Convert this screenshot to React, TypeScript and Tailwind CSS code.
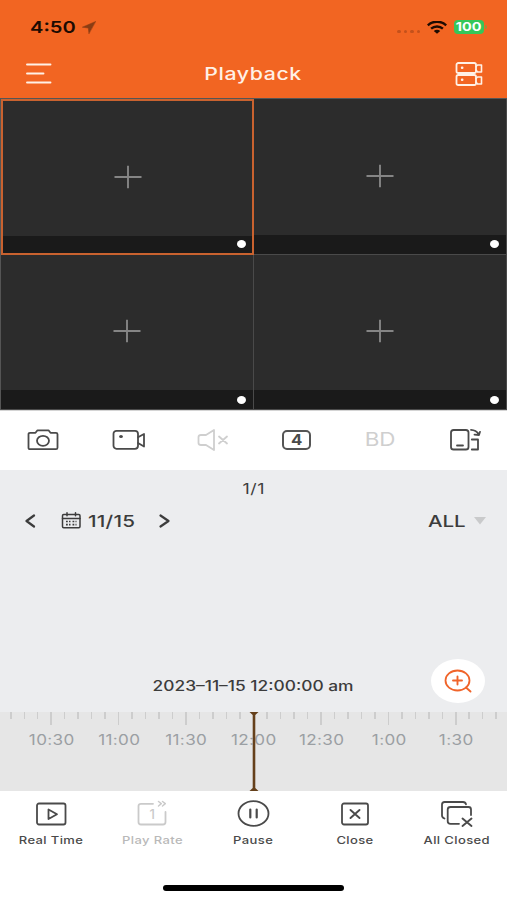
import type { ReactNode } from "react";

type IconProps = { w: number; h: number; className?: string; children: ReactNode };

function Icon({ w, h, className = "", children }: IconProps) {
  return (
    <svg
      width={w}
      height={h}
      viewBox={`0 0 ${w} ${h}`}
      fill="none"
      stroke="currentColor"
      strokeWidth="1.8"
      strokeLinecap="round"
      strokeLinejoin="round"
      className={`shrink-0 ${className}`}
    >
      {children}
    </svg>
  );
}

function StatusBar() {
  return (
    <div className="flex h-[52px] items-center justify-between pt-[2px] pr-[20px] pl-[30px]">
      <div className="flex items-center">
        <span className="w-[46px] origin-left scale-x-[1.22] text-[16.5px] font-semibold text-[#1d0b02]">4:50</span>
        <Icon w={14} h={13} className="ml-[6px] text-[#8a3d14]">
          <path d="M13.5.5.3 6.2l6 .8.6 5.500z" fill="currentColor" strokeWidth=".5" />
        </Icon>
      </div>
      <div className="flex items-center">
        <div className="mt-[8px] flex gap-[3px] pr-[7px]">
          {[0, 1, 2, 3].map((i) => (
            <i key={i} className="h-[3px] w-[3.5px] rounded-full bg-[#c4511b]" />
          ))}
        </div>
        <Icon w={20} h={13} className="text-[#1d0b02]">
          <g strokeLinecap="butt" strokeWidth="2.4">
            <path d="M.8 4.300C6-.5 14-.5 19.200 4.300" />
            <path d="M4.100 7.700c3.300-3 8.500-3 11.800 0" />
          </g>
          <path d="M6.800 10c1.900-1.600 4.500-1.600 6.400 0L10 12.800z" fill="currentColor" stroke="none" />
        </Icon>
        <div className="ml-[7px] flex h-[14px] w-[30px] items-center justify-center rounded-[4px] bg-[#35c759]">
          <span className="scale-x-[1.2] text-[12px] leading-[14px] font-bold text-white">100</span>
        </div>
        <i className="ml-[1px] h-[4px] w-[2px] rounded-r-full bg-[#8f9a3a]" />
      </div>
    </div>
  );
}

function Header() {
  return (
    <header className="h-[98px] bg-[#f26522]">
      <StatusBar />
      <div className="flex h-[44px] items-center justify-between pr-[24px] pl-[26px] text-[#fff1e6]">
        <Icon w={26} h={22}>
          <path d="M1 1.500h23.500M1 10.500h16.500M1 19.500h23.500" strokeWidth="1.900" />
        </Icon>
        <h1 className="scale-x-[1.25] pt-[2px] text-[17px] font-medium tracking-[0.500px]">Playback</h1>
        <Icon w={28} h={26}>
          <rect x="1.500" y="2" width="19.500" height="10" rx="1.800" />
          <rect x="1.500" y="14" width="19.500" height="10" rx="1.800" />
          <path d="m21 5.500 1.500-1.500H26.500v7h-4L21 9M21 17.500l1.500-1.500H26.500v7h-4L21 21" strokeWidth="1.600" />
          <path d="M7 6.800h.3M7 18.800h.3" strokeWidth="2.400" />
        </Icon>
      </div>
    </header>
  );
}

function Channel({ selected = false }: { selected?: boolean }) {
  return (
    <div
      className={`flex flex-col bg-[#2c2c2c] ${
        selected ? "border-2 border-[#c9622f]" : "border-r border-b border-[#4a4a4a]"
      }`}
    >
      <div className="flex flex-1 items-center justify-center pt-[18px]">
        <Icon w={28} h={24} className="text-[#858585]">
          <path d="M.5 12h27M14 .8v22.400" strokeWidth="1.900" strokeLinecap="butt" />
        </Icon>
      </div>
      <div className={`flex items-center justify-end bg-[#1a1a1a] ${selected ? "h-[17px] pr-[6px]" : "h-[19px] pr-[7px]"}`}>
        <i className="h-[8px] w-[9px] rounded-[50%] bg-white" />
      </div>
    </div>
  );
}

function Toolbar() {
  return (
    <div className="grid h-[60px] grid-cols-6 items-center border-t border-[#d4d4d4] bg-white pb-[2px] text-[#4a4a4a]">
      <div className="flex justify-center pl-[2px]">
        <Icon w={32} h={22}>
          <path d="M3 3.800h5.500l2-2.500h11l2 2.500H29q1.500 0 1.500 1.500v13.400q0 1.500-1.500 1.500H3q-1.500 0-1.500-1.500V5.300Q1.500 3.800 3 3.800Z" />
          <ellipse cx="16" cy="11.800" rx="6" ry="5" />
        </Icon>
      </div>
      <div className="flex justify-center pl-[4px]">
        <Icon w={34} h={22}>
          <rect x="1.500" y="1.800" width="24.500" height="18" rx="3" />
          <path d="M26 8.200 32 5v12.500l-6-3.500" />
          <ellipse cx="9" cy="7.500" rx="1.900" ry="1.600" fill="currentColor" stroke="none" />
        </Icon>
      </div>
      <div className="flex justify-center pl-[3px] text-[#cfcfcf]">
        <Icon w={32} h={22}>
          <path d="M4 6h5l8-5v20l-8-5H4q-2.500 0-2.500-2V8Q1.500 6 4 6Z" />
          <path d="m22 7.500 8 7M30 7.500l-8 7" />
        </Icon>
      </div>
      <div className="flex justify-center pl-px">
        <div className="flex h-[20px] w-[29px] items-center justify-center rounded-[5px] border-2 border-[#555555]">
          <span className="scale-x-[1.2] text-[14px] leading-none font-bold">4</span>
        </div>
      </div>
      <div className="flex justify-center pt-px">
        <span className="scale-x-[1.180] text-[19px] font-normal text-[#cfcfcf]">BD</span>
      </div>
      <div className="flex justify-center">
        <Icon w={32} h={23}>
          <rect x="2" y="2" width="17.500" height="19.500" rx="2.600" />
          <path d="M8 17.500h6M22 1.800q5 .2 7.800 4.500M31 3.800l-1 3.200-4.500-.4M22.800 11.500h6.200v10H22.800" />
        </Icon>
      </div>
    </div>
  );
}

function DateControls() {
  return (
    <div className="flex h-[30px] items-center justify-between pr-[21px] pl-[24px] text-[#3c3c3c]">
      <div className="flex items-center">
        <Icon w={12} h={14}>
          <path d="M10 1.500 2.500 7l7.500 5.500" strokeWidth="2.200" />
        </Icon>
        <Icon w={21} h={17} className="mb-px ml-[25px]">
          <rect x="1.500" y="2.500" width="17.500" height="13.300" rx="1.200" strokeWidth="1.500" />
          <path d="M1.500 6.500H19M6 .8v3M14.500.8v3" strokeWidth="1.500" />
          <path d="M5 9.500h4.500M11.500 9.500h4M5 12.700h4.500M11.500 12.700h4" strokeWidth="1.700" strokeDasharray="1.800 1.200" strokeLinecap="butt" />
        </Icon>
        <span className="ml-[6px] w-[69px] origin-left scale-x-[1.250] text-[16.500px] font-medium tracking-[0.200px] whitespace-nowrap">11/15</span>
        <Icon w={13} h={14} className="ml-px">
          <path d="m2.500 1.500 8 5.500-8 5.500" strokeWidth="2.200" />
        </Icon>
      </div>
      <div className="flex items-center">
        <span className="w-[46px] origin-left scale-x-[1.280] text-[16px] font-medium">ALL</span>
        <Icon w={12} h={8} className="text-[#c9cacb]">
          <path d="M0 0h12L6 7.500Z" fill="currentColor" stroke="none" />
        </Icon>
      </div>
    </div>
  );
}

const TIMES = ["10:30", "11:00", "11:30", "12:00", "12:30", "1:00", "1:30"];
const TICKS = Array.from({ length: 37 }, (_, i) => i - 18);

function Timeline() {
  return (
    <div className="relative h-[79px] overflow-hidden bg-[#e6e6e6]">
      <div className="flex h-[15px] justify-center">
        {TICKS.map((k) => (
          <div key={k} className="flex w-[13.490px] shrink-0 justify-center">
            <i className={`w-[1.500px] bg-[#cdcdcd] ${k % 5 === 0 ? "h-[13px]" : "h-[7px]"}`} />
          </div>
        ))}
      </div>
      <div className="flex justify-center pl-px text-[#9b9fa3]">
        {TIMES.map((t) => (
          <div key={t} className="flex w-[67.450px] shrink-0 justify-center">
            <span className="scale-x-[1.220] text-[14px] leading-[26px] tracking-[0.300px]">{t}</span>
          </div>
        ))}
      </div>
      <svg width="12" height="79" viewBox="0 0 12 79" className="absolute top-0 left-[248px]" fill="#65401b">
        <path d="M1.500 0h9L7.300 3v73l3.200 3h-9l3.200-3V3Z" />
      </svg>
    </div>
  );
}

function PlaybackPanel() {
  return (
    <section className="flex h-[321px] flex-col bg-[#ecedef]">
      <div className="flex h-[36px] items-center justify-center text-[#3c3c3c]">
        <span className="scale-x-[1.270] text-[14px] tracking-[0.400px]">1/1</span>
      </div>
      <DateControls />
      <div className="relative mt-auto flex h-[54px] items-center justify-center text-[#3c3c3c]">
        <span className="scale-x-[1.240] text-[14px] font-medium whitespace-nowrap">2023–11–15 12:00:00 am</span>
        <button className="absolute top-px right-[22px] flex h-[44px] w-[54px] items-center justify-center rounded-[50%] bg-white text-[#f0642a]">
          <Icon w={28} h={24}>
            <ellipse cx="13.500" cy="11.500" rx="12" ry="10" />
            <path d="M9 11.500h9M13.500 7.500v8M22 18.500l4.500 4" strokeWidth="1.900" />
          </Icon>
        </button>
      </div>
      <Timeline />
    </section>
  );
}

function Action({ label, muted = false, children }: { label: string; muted?: boolean; children: ReactNode }) {
  return (
    <div className={`flex flex-col items-center ${muted ? "text-[#b9b9b9]" : "text-[#4a4a4a]"}`}>
      <div className="flex h-[29px] items-center">{children}</div>
      <span className="mt-[6px] scale-x-[1.240] text-[10.500px] leading-[14px] font-medium tracking-[0.300px] whitespace-nowrap">{label}</span>
    </div>
  );
}

function BottomBar() {
  return (
    <footer className="flex h-[109px] flex-col bg-white pt-[8px]">
      <div className="grid grid-cols-5">
        <Action label="Real Time">
          <Icon w={32} h={24}>
            <rect x="2" y="1.500" width="28.500" height="21" rx="2" />
            <path d="M13.500 7.500v9.500l8.500-4.800Z" />
          </Icon>
        </Action>
        <Action label="Play Rate" muted>
          <div className="relative text-[#cacaca]">
            <Icon w={32} h={24} className="overflow-visible">
              <path d="M17 1.800H5Q2.500 1.800 2.500 4v16q0 2.500 2.500 2.500h22q2.500 0 2.500-2.500v-10" />
              <path d="m22.500-.5 2.800 2.200L22.500 4M26.500-.5l2.800 2.200L26.500 4" strokeWidth="1.500" />
            </Icon>
            <span className="absolute inset-0 flex items-center justify-center pt-[2px] text-[13px] leading-none font-medium">1</span>
          </div>
        </Action>
        <Action label="Pause">
          <Icon w={33} h={27}>
            <ellipse cx="16.500" cy="13.500" rx="15" ry="12.300" />
            <path d="M13.300 9.500v8M19.700 9.500v8" strokeWidth="2.200" />
          </Icon>
        </Action>
        <Action label="Close">
          <Icon w={30} h={24}>
            <rect x="2" y="1.500" width="26" height="21" rx="2" />
            <path d="m10.500 8 9 8M19.500 8l-9 8" strokeWidth="1.900" />
          </Icon>
        </Action>
        <Action label="All Closed">
          <Icon w={34} h={28} className="ml-[2px]">
            <path d="M4.500 18.500q-2.500-1-2.500-3V4.500Q2 2 4.500 2H23q2.500 0 3 2.300" />
            <path d="M19 23.800h-8.500q-2.800 0-2.800-2.500V9.500Q7.700 7 10.500 7H28.500q2.500 0 2.500 2.500v5.500" />
            <path d="m22.500 18.500 9 7.500M31.500 18.500l-9 7.500" strokeWidth="1.900" />
          </Icon>
        </Action>
      </div>
      <div className="mx-auto mt-auto mb-[9px] h-[6px] w-[181px] rounded-full bg-black" />
    </footer>
  );
}

export default function App() {
  return (
    <main className="h-[900px] w-[507px] overflow-hidden bg-white font-['Inter',sans-serif]">
      <Header />
      <div className="grid h-[312px] grid-cols-2 grid-rows-2 border-t border-l border-[#555555] bg-[#4a4a4a]">
        <Channel selected />
        <Channel />
        <Channel />
        <Channel />
      </div>
      <Toolbar />
      <PlaybackPanel />
      <BottomBar />
    </main>
  );
}
